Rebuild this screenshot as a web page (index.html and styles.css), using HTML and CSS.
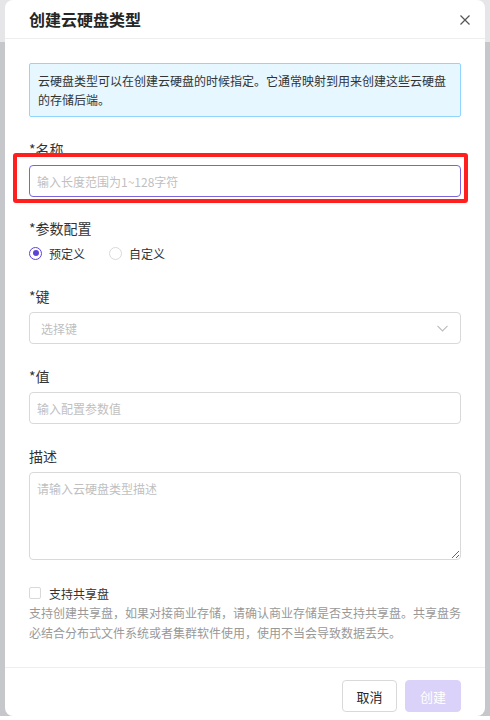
FILE: index.html
```html
<!DOCTYPE html>
<html lang="zh-CN">
<head>
<meta charset="utf-8">
<title>创建云硬盘类型</title>
<link rel="stylesheet" href="styles.css">
</head>
<body>
<div class="page">
  <div class="dialog">
    <div class="dialog-header">
      <h1 class="dialog-title">创建云硬盘类型</h1>
      <button class="close-btn" aria-label="关闭">
        <svg width="10" height="10" viewBox="0 0 10 10"><path d="M0.5 0.5 L9.5 9.5 M9.5 0.5 L0.5 9.5" stroke="#555" stroke-width="1.2" fill="none"/></svg>
      </button>
    </div>
    <div class="dialog-body">
      <div class="alert">云硬盘类型可以在创建云硬盘的时候指定。它通常映射到用来创建这些云硬盘的存储后端。</div>

      <div class="field field-first">
        <div class="label">*名称</div>
        <div class="input-wrap">
          <input class="input input-focus" type="text" placeholder="输入长度范围为1~128字符">
          <div class="highlight"></div>
        </div>
      </div>

      <div class="field field-radio">
        <div class="label">*参数配置</div>
        <div class="radio-group">
          <label class="radio"><span class="radio-dot checked"></span><span>预定义</span></label>
          <label class="radio"><span class="radio-dot"></span><span>自定义</span></label>
        </div>
      </div>

      <div class="field">
        <div class="label">*键</div>
        <div class="select">
          <span class="select-placeholder">选择键</span>
          <svg class="chevron" width="11" height="7" viewBox="0 0 11 7"><path d="M0.5 0.8 L5.5 6 L10.5 0.8" stroke="#bbb" stroke-width="1.1" fill="none"/></svg>
        </div>
      </div>

      <div class="field">
        <div class="label">*值</div>
        <input class="input" type="text" placeholder="输入配置参数值">
      </div>

      <div class="field">
        <div class="label">描述</div>
        <textarea class="textarea" placeholder="请输入云硬盘类型描述"></textarea>
      </div>

      <label class="checkbox-row"><span class="checkbox"></span><span>支持共享盘</span></label>
      <p class="help">支持创建共享盘，如果对接商业存储，请确认商业存储是否支持共享盘。共享盘务必结合分布式文件系统或者集群软件使用，使用不当会导致数据丢失。</p>
    </div>
    <div class="dialog-footer">
      <button class="btn">取消</button>
      <button class="btn btn-primary" disabled>创建</button>
    </div>
  </div>
</div>
</body>
</html>
```

FILE: styles.css
```css
* { box-sizing: border-box; }

html, body {
  margin: 0;
  padding: 0;
  background: #ffffff;
  font-family: "Noto Sans CJK SC", "Microsoft YaHei", sans-serif;
  color: #262626;
}

.page {
  height: 716px;
  padding: 0 5px;
  background: linear-gradient(#e6e6e8 0, #e6e6e8 42px, #c6c7cb 42px);
  display: flex;
}

.dialog {
  width: 480px;
  height: 716px;
  background: #fff;
  border-radius: 8px;
  display: flex;
  flex-direction: column;
  overflow: hidden;
}

.dialog-header {
  height: 39px;
  flex: none;
  display: flex;
  align-items: center;
  justify-content: space-between;
  padding: 0 15px 0 24px;
  border-bottom: 1px solid #eeeeee;
}

.dialog-title {
  margin: 0;
  font-size: 16px;
  font-weight: 600;
  line-height: 22px;
  color: #262626;
}

.close-btn {
  border: 0;
  background: transparent;
  padding: 0;
  width: 10px;
  height: 10px;
  display: flex;
  margin-top: 1px;
}

.dialog-body {
  flex: 1;
  padding: 24px 24px 0;
  overflow: hidden;
}

.alert {
  background: #e6f7ff;
  border: 1px solid #91d5ff;
  border-radius: 2px;
  padding: 7px 8px;
  font-size: 12px;
  line-height: 19px;
  color: #333;
}

.field { margin-top: 21px; }
.field-radio { margin-top: 20px; }

.label {
  font-size: 14px;
  line-height: 22px;
  color: #333;
  margin-bottom: 5px;
}

.input-wrap { position: relative; }

.input {
  display: block;
  width: 100%;
  height: 32px;
  border: 1px solid #d9d9d9;
  border-radius: 4px;
  padding: 0 7px;
  font-family: inherit;
  font-size: 12px;
  color: #262626;
  outline: none;
  background: #fff;
}

.input::placeholder,
.textarea::placeholder { color: #bfbfbf; }

.input-focus { border-color: #7a65db; }

.highlight {
  position: absolute;
  top: -12px;
  left: -16px;
  right: -7px;
  bottom: -6px;
  border: 4px solid #ff1f1f;
  border-radius: 3px;
  pointer-events: none;
}

.radio-group {
  display: flex;
  height: 22px;
  margin-top: -2px;
  align-items: center;
}

.radio {
  display: flex;
  align-items: center;
  font-size: 12px;
  color: #333;
  margin-right: 24px;
}

.radio-dot {
  width: 13px;
  height: 13px;
  border: 1px solid #d9d9d9;
  border-radius: 50%;
  margin-right: 7px;
  position: relative;
}

.radio-dot.checked { border-color: #5b43d6; }

.radio-dot.checked::after {
  content: "";
  position: absolute;
  left: 2.5px;
  top: 2.5px;
  width: 6px;
  height: 6px;
  border-radius: 50%;
  background: #5b43d6;
}

.select {
  height: 32px;
  border: 1px solid #d9d9d9;
  border-radius: 4px;
  padding: 0 12px 0 11px;
  display: flex;
  align-items: center;
  justify-content: space-between;
  font-size: 12px;
}

.select-placeholder { color: #bfbfbf; }

.textarea {
  display: block;
  width: 100%;
  height: 88px;
  border: 1px solid #d9d9d9;
  border-radius: 4px;
  padding: 7px;
  font-family: inherit;
  font-size: 12px;
  line-height: 18px;
  resize: vertical;
  outline: none;
}

.checkbox-row {
  display: flex;
  align-items: center;
  height: 22px;
  margin-top: 22px;
  font-size: 12px;
  color: #333;
}

.checkbox {
  width: 12px;
  height: 12px;
  border: 1px solid #d9d9d9;
  border-radius: 2px;
  margin-right: 8px;
}

.help {
  margin: -1px 0 0;
  font-size: 12px;
  line-height: 20px;
  color: #999;
}

.dialog-footer {
  flex: none;
  border-top: 1px solid #eeeeee;
  padding: 12px 24px 4px;
  display: flex;
  justify-content: flex-end;
  gap: 8px;
}

.btn {
  height: 32px;
  width: 55px;
  border: 1px solid #d9d9d9;
  border-radius: 4px;
  background: #fff;
  font-family: inherit;
  font-size: 13px;
  color: #262626;
  padding: 0;
}

.btn-primary {
  width: 56px;
  border-color: #dad2f8;
  background: #dad2f8;
  color: #fff;
}
```
